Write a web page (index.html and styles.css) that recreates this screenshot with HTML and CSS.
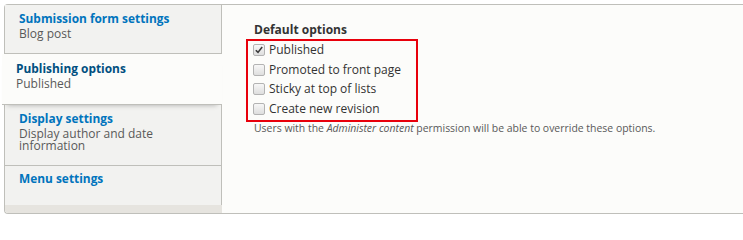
FILE: index.html
```html
<!DOCTYPE html>
<html lang="en">
<head>
<meta charset="utf-8">
<title>Vertical tabs</title>
<link rel="stylesheet" href="styles.css">
</head>
<body>
<div class="vtabs">
  <ul class="menu">
    <li class="item tab1">
      <a class="title" href="#">Submission form settings</a>
      <span class="summary">Blog post</span>
    </li>
    <li class="item selected">
      <a class="title" href="#">Publishing options</a>
      <span class="summary">Published</span>
    </li>
    <li class="item tab3">
      <a class="title" href="#">Display settings</a>
      <span class="summary">Display author and date information</span>
    </li>
    <li class="item tab4">
      <a class="title" href="#">Menu settings</a>
    </li>
  </ul>
  <div class="pane">
    <div class="legend">Default options</div>
    <div class="redbox">
      <label class="row"><span class="cb"><svg width="10" height="10" viewBox="0 0 10 10"><path d="M1.8 5.2 L4 7.4 L8.2 2" fill="none" stroke="#3a3a3a" stroke-width="1.6"/></svg></span>Published</label>
      <label class="row"><span class="cb"></span>Promoted to front page</label>
      <label class="row"><span class="cb"></span>Sticky at top of lists</label>
      <label class="row"><span class="cb"></span>Create new revision</label>
    </div>
    <div class="desc">Users with the <em>Administer content</em> permission will be able to override these options.</div>
  </div>
</div>
</body>
</html>
```

FILE: styles.css
```css
html, body {
  margin: 0;
  padding: 0;
  background: #ffffff;
  overflow: hidden;
}
body {
  font-family: "Open Sans", "DejaVu Sans", sans-serif;
  font-size: 12px;
  color: #333333;
}
.vtabs {
  margin: 4px 0 0 4px;
  width: 739px;
  height: 208px;
  border: 1px solid #bfbfba;
  border-right: 0;
  border-radius: 4px 0 0 4px;
  display: flex;
  background: #fcfcfa;
}
.menu {
  list-style: none;
  margin: 0;
  padding: 0;
  width: 217px;
  flex: none;
  background: #e6e4df;
  border-bottom-left-radius: 3px;
  display: flex;
  flex-direction: column;
}
.item {
  box-sizing: border-box;
  background: #f2f2f0;
  border-right: 1px solid #bfbfba;
  border-bottom: 1px solid #bfbfba;
  padding: 6px 10px 0 14px;
  display: flex;
  flex-direction: column;
}
.tab1 { height: 49px; }
.selected {
  height: 51px;
  width: 220px;
  margin-left: -3px;
  padding-left: 14px;
  padding-top: 7px;
  border-right: 0;
  background: #fcfcfa;
  position: relative;
  z-index: 1;
  box-shadow: 0 5px 5px -5px rgba(0, 0, 0, 0.3);
}
.tab3 { height: 61px; padding-top: 6px; }
.tab4 { height: 39px; border-bottom: 0; padding-top: 5px; }
.title {
  font-weight: bold;
  font-size: 11.9px;
  line-height: 15px;
  color: #0074bd;
  text-decoration: none;
}
.selected .title { color: #004f80; }
.summary {
  padding-top: 2px;
  font-size: 12px;
  line-height: 12px;
  color: #595959;
}
.pane {
  flex: 1;
  padding: 17px 0 0 32px;
}
.legend {
  font-weight: bold;
  font-size: 12px;
  line-height: 15px;
  color: #333333;
}
.redbox {
  margin: 2px 0 0 -8px;
  width: 163px;
  border: 2px solid #e8000b;
  padding: 1px 0 3px 5px;
}
.row {
  display: flex;
  align-items: center;
  gap: 4px;
  line-height: 16px;
  height: 16px;
  margin-bottom: 3.7px;
  color: #333333;
}
.row:last-child { margin-bottom: 0; }
.cb {
  box-sizing: border-box;
  width: 12px;
  height: 12px;
  border: 1px solid #b3b3b3;
  border-radius: 2px;
  background: linear-gradient(#f7f7f7, #dedede);
  display: flex;
  align-items: center;
  justify-content: center;
}
.cb svg { display: block; }
.desc {
  font-size: 10.45px;
  line-height: 12px;
  color: #595959;
}
```
